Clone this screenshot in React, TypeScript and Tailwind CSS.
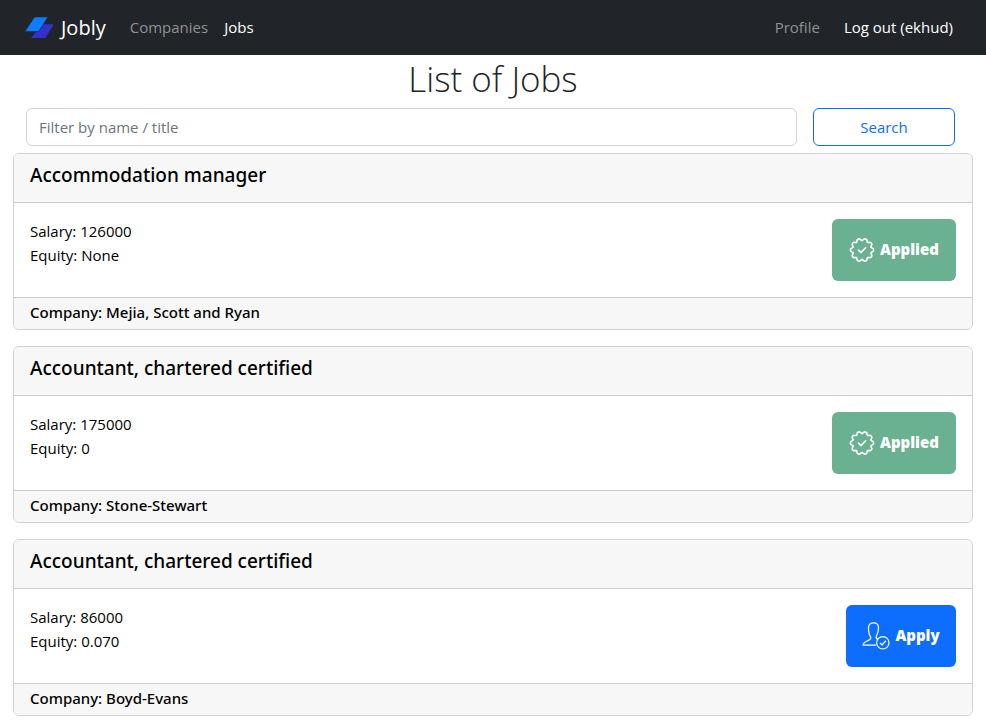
type Job = {
  id: number;
  title: string;
  salary: string;
  equity: string;
  company: string;
  applied: boolean;
};

const jobs: Job[] = [
  { id: 1, title: "Accommodation manager", salary: "126000", equity: "None", company: "Mejia, Scott and Ryan", applied: true },
  { id: 2, title: "Accountant, chartered certified", salary: "175000", equity: "0", company: "Stone-Stewart", applied: true },
  { id: 3, title: "Accountant, chartered certified", salary: "86000", equity: "0.070", company: "Boyd-Evans", applied: false },
];

function Logo() {
  return (
    <svg className="h-6 w-7 shrink-0" viewBox="0 0 28 24" aria-hidden="true">
      <path d="M17.500 8.200H29l-8.800 13.800H6z" fill="#3230cf" />
      <path d="M9.500 1H23l-9.500 14.500H0z" fill="#0d7dff" stroke="#212529" strokeWidth="0.600" />
    </svg>
  );
}

// Ten-lobed seal outline: lobes sit every 36 degrees, notches halfway between.
const sealPath = (() => {
  const point = (radius: number, degrees: number) => {
    const a = (degrees * Math.PI) / 180;
    return `${(13 + radius * Math.cos(a)).toFixed(2)} ${(13 + radius * Math.sin(a)).toFixed(2)}`;
  };
  const parts = [`M${point(9.3, -18)}`];
  for (let i = 0; i < 10; i++) {
    const mid = i * 36;
    parts.push(`L${point(11.4, mid - 6)}`, `Q${point(11.8, mid)} ${point(11.4, mid + 6)}`, `L${point(9.3, mid + 18)}`);
  }
  return `${parts.join("")}Z`;
})();

function SealIcon() {
  return (
    <svg className="size-[26px]" viewBox="0 0 26 26" fill="none" stroke="currentColor" strokeLinejoin="round" strokeLinecap="round" aria-hidden="true">
      <path d={sealPath} strokeWidth="1.600" />
      <path d="M9.500 13.200l2.500 2.400 4.600-4.800" strokeWidth="1.600" />
    </svg>
  );
}

function PersonIcon() {
  return (
    <svg className="size-7" viewBox="0 0 28 28" fill="none" stroke="currentColor" strokeWidth="1.200" strokeLinejoin="round" aria-hidden="true">
      <path d="M14 23.200H1C1 18.500 8.900 19.500 8.900 15.500C7.400 13.500 6.500 9.500 6.500 5.800C6.500 2.600 8.500.9 11.500.9S16.500 2.600 16.500 5.800C16.500 9.500 15.600 12 14.300 14.200C13.900 16 14.500 17 16 17.600" />
      <circle cx="20.800" cy="20.800" r="6.200" />
      <path d="M18 20.900l2.100 2.100 3.800-4.300" />
    </svg>
  );
}

function JobCard({ job }: { job: Job }) {
  return (
    <article className="overflow-hidden rounded-md border border-[#d2d2d2] bg-white">
      <header className="border-b border-[#cbcbcb] bg-[#f7f7f7] px-4 pt-[9px] pb-[15px]">
        <h2 className="font-['Noto_Sans','Open_Sans',sans-serif] text-[19px] leading-6 font-medium">{job.title}</h2>
      </header>
      <div className="flex items-start justify-between p-4">
        <div className="text-[15px] leading-6">
          <p>Salary: {job.salary}</p>
          <p>Equity: {job.equity}</p>
        </div>
        {job.applied ? (
          <button type="button" disabled className="flex h-[62px] w-[124px] items-center justify-center gap-[5px] rounded-md bg-[#6ab191] text-[15px] font-extrabold text-white">
            <SealIcon />
            <span className="pb-0.5">Applied</span>
          </button>
        ) : (
          <button type="button" className="flex h-[62px] w-[110px] items-center justify-center gap-[5px] rounded-md bg-[#0d6efd] text-[15px] font-extrabold text-white">
            <PersonIcon />
            <span className="pb-0.5">Apply</span>
          </button>
        )}
      </div>
      <footer className="border-t border-[#cbcbcb] bg-[#f7f7f7] px-4 pt-0.5 pb-[5px] font-['Noto_Sans','Open_Sans',sans-serif] text-[15px] leading-6 font-medium">
        <p>Company: {job.company}</p>
      </footer>
    </article>
  );
}

export default function App() {
  return (
    <div className="min-h-screen bg-white font-['Open_Sans','Noto_Sans',sans-serif] text-black">
      <nav className="flex h-[55px] items-center bg-[#212529] pr-[33px] pl-[25px] text-[15px] text-white">
        <a href="#home" className="flex items-center gap-2 text-[20px]">
          <Logo />
          Jobly
        </a>
        <a href="#companies" className="ml-6 text-[#909294]">Companies</a>
        <a href="#jobs" className="ml-4">Jobs</a>
        <a href="#profile" className="ml-auto text-[#909294]">Profile</a>
        <a href="#logout" className="ml-6">Log out (ekhud)</a>
      </nav>
      <main>
        <h1 className="text-center text-[35px] leading-[48px] font-light text-[#212529]">List of Jobs</h1>
        <form className="mt-[5px] mr-[31px] ml-[26px] flex gap-4" onSubmit={(e) => e.preventDefault()}>
          <input
            type="text"
            aria-label="Filter by name / title"
            placeholder="Filter by name / title"
            className="h-[38px] min-w-0 flex-1 rounded-md border border-[#ced4da] px-3 text-[15px] placeholder:text-[#6c757d]"
          />
          <button type="submit" className="h-[38px] w-[142px] rounded-md border border-[#0d6efd] text-[15px] text-[#0d6efd]">
            Search
          </button>
        </form>
        <section className="mx-[13px] mt-[7px] flex flex-col gap-4">
          {jobs.map((job) => (
            <JobCard key={job.id} job={job} />
          ))}
        </section>
      </main>
    </div>
  );
}
